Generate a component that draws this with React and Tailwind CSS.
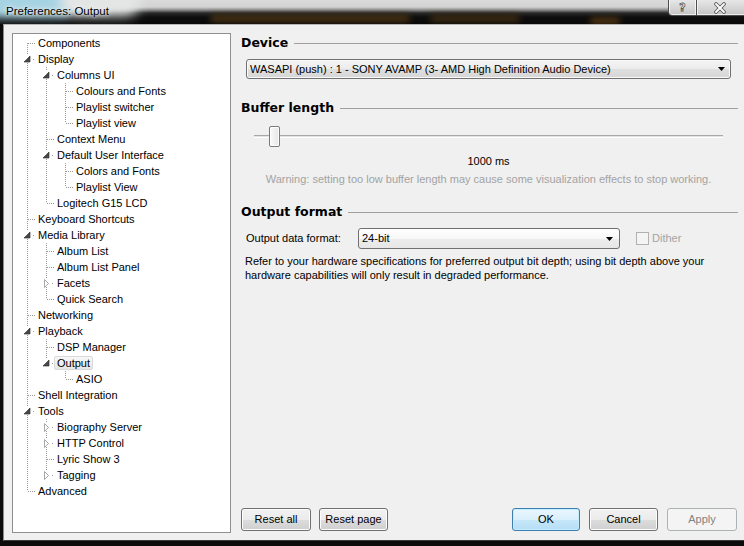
import React from 'react';

const TREE = [
  ['Components', 0, 'leaf'],
  ['Display', 0, 'open'],
  ['Columns UI', 1, 'open'],
  ['Colours and Fonts', 2, 'leaf'],
  ['Playlist switcher', 2, 'leaf'],
  ['Playlist view', 2, 'leaf'],
  ['Context Menu', 1, 'leaf'],
  ['Default User Interface', 1, 'open'],
  ['Colors and Fonts', 2, 'leaf'],
  ['Playlist View', 2, 'leaf'],
  ['Logitech G15 LCD', 1, 'leaf'],
  ['Keyboard Shortcuts', 0, 'leaf'],
  ['Media Library', 0, 'open'],
  ['Album List', 1, 'leaf'],
  ['Album List Panel', 1, 'leaf'],
  ['Facets', 1, 'closed'],
  ['Quick Search', 1, 'leaf'],
  ['Networking', 0, 'leaf'],
  ['Playback', 0, 'open'],
  ['DSP Manager', 1, 'leaf'],
  ['Output', 1, 'open', true],
  ['ASIO', 2, 'leaf'],
  ['Shell Integration', 0, 'leaf'],
  ['Tools', 0, 'open'],
  ['Biography Server', 1, 'closed'],
  ['HTTP Control', 1, 'closed'],
  ['Lyric Show 3', 1, 'leaf'],
  ['Tagging', 1, 'closed'],
  ['Advanced', 0, 'leaf'],
];

function hasNext(i) {
  const lv = TREE[i][1];
  for (let j = i + 1; j < TREE.length; j++) {
    if (TREE[j][1] < lv) return false;
    if (TREE[j][1] === lv) return true;
  }
  return false;
}

function ancestorContinues(i, k) {
  for (let a = i - 1; a >= 0; a--) {
    if (TREE[a][1] === k) return hasNext(a);
  }
  return false;
}

const DOT = '#9a9a9a';

function AncestorCell({ on }) {
  return (
    <svg width="19" height="16" className="shrink-0 block" shapeRendering="crispEdges">
      {on && <line x1="9.5" y1="0" x2="9.5" y2="16" stroke={DOT} strokeDasharray="1 1" />}
    </svg>
  );
}

function OwnCell({ i, kind }) {
  const first = i === 0;
  const next = hasNext(i);
  const node = kind !== 'leaf';
  return (
    <svg width="17" height="16" className="shrink-0 block" shapeRendering="crispEdges">
      {!first && <line x1="9.5" y1="0" x2="9.5" y2={node ? 4 : 8} stroke={DOT} strokeDasharray="1 1" />}
      {next && <line x1="9.5" y1={node ? 12 : 8} x2="9.5" y2="16" stroke={DOT} strokeDasharray="1 1" />}
      <line x1={node ? 15 : 10} y1="8.5" x2="17" y2="8.5" stroke={DOT} strokeDasharray="1 1" />
      {kind === 'open' && (
        <polygon points="12,5 12,11 6,11" fill="#4a4a4a" stroke="#262626" strokeWidth="0.6" shapeRendering="geometricPrecision" />
      )}
      {kind === 'closed' && (
        <polygon points="7.5,4.5 7.5,12.5 11.5,8.5" fill="#ffffff" stroke="#a6a6a6" shapeRendering="geometricPrecision" />
      )}
    </svg>
  );
}

function TreeRow({ i }) {
  const [label, level, kind, selected] = TREE[i];
  const cells = [];
  for (let k = 0; k < level; k++) cells.push(<AncestorCell key={k} on={ancestorContinues(i, k)} />);
  return (
    <div className="flex h-4 items-center">
      {cells}
      <OwnCell i={i} kind={kind} />
      <span
        className={
          'whitespace-nowrap px-[2px] leading-[12px] border rounded-[2px] ' +
          (selected
            ? 'border-[#d9d9d9] bg-[linear-gradient(to_bottom,#f8f8f8,#e6e6e6)]'
            : 'border-transparent')
        }
      >
        {label}
      </span>
    </div>
  );
}

function Heading({ children }) {
  return (
    <div className="flex h-4 items-center">
      <span className="font-['DejaVu_Sans',sans-serif] font-bold text-[12.5px] leading-4 text-black whitespace-nowrap">
        {children}
      </span>
      <div className="ml-[6px] h-px flex-1 bg-[#a0a0a0]" />
    </div>
  );
}

function Arrow() {
  return (
    <svg width="8" height="4" className="block">
      <polygon points="0,0 7,0 3.5,4" fill="#000" />
    </svg>
  );
}

function Button({ children, kind = 'normal', className = '' }) {
  const styles = {
    normal:
      'border-[#707070] bg-[linear-gradient(to_bottom,#f2f2f2_0%,#ebebeb_50%,#dddddd_51%,#cfcfcf_100%)] shadow-[inset_0_0_0_1px_#fcfcfc] text-black',
    default:
      'border-[#3c7fb1] bg-[linear-gradient(to_bottom,#eaf6fd_0%,#d9f0fc_50%,#c6e7f9_51%,#b5def5_100%)] shadow-[inset_0_0_0_1px_#c4ecff] text-black',
    disabled: 'border-[#adb2b5] bg-[#f4f4f4] text-[#838383]',
  };
  return (
    <div
      className={
        'flex h-[23px] items-center justify-center rounded-[3px] border ' + styles[kind] + ' ' + className
      }
    >
      {children}
    </div>
  );
}

function TitleBar() {
  return (
    <div className="relative h-[24px] shrink-0 overflow-hidden bg-[linear-gradient(to_bottom,#dadada_0px,#d3d3d3_7px,#8c8c8c_10px,#2a2a2a_13px,#0e0e0e_17px,#080808_24px)]">
      <div className="absolute left-[-20px] top-[-12px] h-[30px] w-[95px] rounded-full bg-[#a6d3e3] blur-[5px]" />
      <div className="absolute left-[60px] top-[-14px] h-[30px] w-[80px] rounded-full bg-[#e4e6e6] blur-[6px]" />
      <div className="absolute left-[210px] top-[15px] h-[7px] w-[200px] rounded-full bg-[#4a3414] blur-[3px]" />
      <div className="absolute left-[430px] top-[15px] h-[7px] w-[90px] rounded-full bg-[#3f2c12] blur-[3px]" />
      <div className="absolute left-[590px] top-[18px] h-[6px] w-[30px] rounded-full bg-[#5a3a12] blur-[3px]" />
      <div className="relative flex h-full items-start pl-[6px] pt-[4px]">
        <span className="text-[11.5px] leading-[14px] text-black [text-shadow:0_0_6px_#ffffff,0_0_3px_#e8f4f8]">
          Preferences: Output
        </span>
      </div>
      <div className="absolute right-[-6px] top-[-2px] flex">
        <div className="flex h-[18px] w-[29px] items-center justify-center rounded-bl-[4px] border border-[#4d4d4d] bg-[linear-gradient(to_bottom,#e9e9e9,#d4d4d4_60%,#c3c3c3)] shadow-[inset_0_0_0_1px_rgba(255,255,255,0.7)]">
          <span className="mt-[1px] font-['DejaVu_Sans',sans-serif] font-bold text-[11px] leading-none text-white [-webkit-text-stroke:0.8px_#555]">
            ?
          </span>
        </div>
        <div className="flex h-[18px] w-[53px] items-center justify-center border border-l-0 border-[#4d4d4d] bg-[linear-gradient(to_bottom,#e9e9e9,#d4d4d4_60%,#c3c3c3)] shadow-[inset_0_0_0_1px_rgba(255,255,255,0.7)]">
          <svg width="14" height="12" className="mr-[6px] mt-[1px]">
            <path d="M3 2 L11 10 M11 2 L3 10" stroke="#555" strokeWidth="3.6" strokeLinecap="round" fill="none" />
            <path d="M3 2 L11 10 M11 2 L3 10" stroke="#fff" strokeWidth="1.8" strokeLinecap="round" fill="none" />
          </svg>
        </div>
      </div>
    </div>
  );
}

export default function App() {
  return (
    <div className="flex h-[546px] w-[744px] flex-col overflow-hidden bg-[#0b0b0b] font-['Liberation_Sans',Arial,sans-serif] text-[11px] text-black">
      <TitleBar />
      <div className="ml-[3px] mb-[5px] flex flex-1 border-l border-t border-b border-l-[#8a8a8a] border-t-[#b5b5b5] border-b-[#3a3a3a] bg-[#f0f0f0]">
        {/* Tree */}
        <div className="pl-[8px] pt-[8px]">
          <div className="h-[500px] w-[219px] border border-[#8e8f8f] bg-white pl-[5px] pt-[1px]">
            {TREE.map((_, i) => (
              <TreeRow key={i} i={i} />
            ))}
          </div>
        </div>

        {/* Right panel */}
        <div className="flex flex-1 flex-col pl-[10px] pr-[6px] pt-[10px] pb-[9px]">
          <Heading>Device</Heading>
          <div className="ml-[5px] mt-[8px] flex h-[20px] w-[485px] items-center justify-between rounded-[3px] border border-[#707070] bg-[linear-gradient(to_bottom,#f4f4f4_0%,#ececec_50%,#dfdfdf_51%,#d6d6d6_100%)] pl-[3px] pr-[4px] shadow-[inset_0_0_0_1px_#fafafa]">
            <span className="whitespace-nowrap">WASAPI (push) : 1 - SONY AVAMP (3- AMD High Definition Audio Device)</span>
            <Arrow />
          </div>

          <div className="mt-[21px]">
            <Heading>Buffer length</Heading>
          </div>
          <div className="relative ml-[13px] mt-[10px] h-[21px] w-[469px]">
            <div className="absolute left-0 right-0 top-[9px] h-[3px] border-t border-[#a8a8a8] border-b border-b-white bg-[#e3e3e3]" />
            <div className="absolute left-[15px] top-0 h-[21px] w-[11px] rounded-[2px] border border-[#7a7a7a] bg-[linear-gradient(to_right,#fafafa,#e6e6e6)] shadow-[inset_0_0_0_1px_#ffffff]" />
          </div>
          <div className="ml-[13px] mt-[7px] h-[14px] w-[469px] text-center leading-[14px]">1000 ms</div>
          <div className="ml-[10px] mt-[4px] h-[14px] w-[475px] whitespace-nowrap text-center leading-[14px] text-[#a3a3a3]">
            Warning: setting too low buffer length may cause some visualization effects to stop working.
          </div>

          <div className="mt-[18px]">
            <Heading>Output format</Heading>
          </div>
          <div className="ml-[5px] mt-[8px] flex h-[21px] items-center">
            <span className="w-[112px] whitespace-nowrap">Output data format:</span>
            <div className="flex h-[21px] w-[262px] items-center justify-between rounded-[3px] border border-[#707070] bg-[linear-gradient(to_bottom,#ffffff_0%,#f7f7f7_50%,#ededed_51%,#e6e6e6_100%)] pl-[3px] pr-[5px]">
              <span>24-bit</span>
              <Arrow />
            </div>
            <div className="ml-[16px] h-[13px] w-[13px] border border-[#b1b1b1] bg-[#f4f4f4]" />
            <span className="ml-[3px] text-[#a3a3a3]">Dither</span>
          </div>
          <div className="ml-[4px] mt-[5px] leading-[14px] whitespace-nowrap">
            Refer to your hardware specifications for preferred output bit depth; using bit depth above your
            <br />
            hardware capabilities will only result in degraded performance.
          </div>

          <div className="mt-auto flex items-center pr-[1px]">
            <Button className="w-[70px]">Reset all</Button>
            <Button className="ml-[8px] w-[69px]">Reset page</Button>
            <div className="flex-1" />
            <Button kind="default" className="w-[68px]">OK</Button>
            <Button className="ml-[9px] w-[69px]">Cancel</Button>
            <Button kind="disabled" className="ml-[9px] w-[70px]">Apply</Button>
          </div>
        </div>
      </div>
    </div>
  );
}
